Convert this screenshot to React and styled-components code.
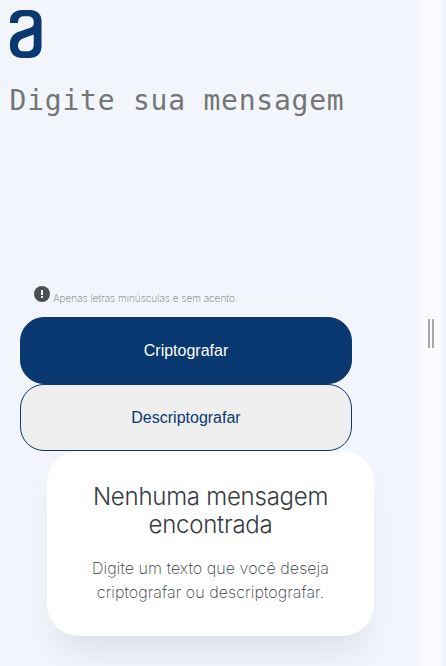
import React from 'react';
import styled, { createGlobalStyle } from 'styled-components';

const GlobalStyle = createGlobalStyle`
  * { box-sizing: border-box; }
  body { margin: 0; background: #f3f5fc; overflow: hidden; }
`;

const Page = styled.div`
  display: grid;
  grid-template-columns: 420px 22px 4px;
  height: 666px;
  overflow: hidden;
`;

const Main = styled.main`
  display: flex;
  flex-direction: column;
  align-items: flex-start;
  overflow: hidden;
  background: #f3f5fc;
`;

const Logo = styled.svg`
  display: block;
  flex: none;
  width: 32px;
  height: 48px;
  margin: 10px 0 0 9.7px;
`;

const Message = styled.textarea`
  display: block;
  flex: none;
  width: 390px;
  height: 198px;
  margin: 24px 0 0 9.5px;
  padding: 0;
  border: 0;
  outline: 0;
  resize: none;
  background: transparent;
  font: 28px/38px "DejaVu Sans Mono", monospace;
  letter-spacing: 0.77px;
  white-space: nowrap;
  overflow: hidden;
  &::placeholder { color: #757575; opacity: 1; }
`;

const Hint = styled.div`
  display: flex;
  flex: none;
  height: 31px;
  margin: 6px 0 0 34px;
  gap: 3px;
`;

const HintIcon = styled.svg`
  width: 16px;
  height: 16px;
`;

const HintText = styled.span`
  margin-top: 4px;
  font: 200 10px/16px Inter, sans-serif;
  letter-spacing: 0.02px;
  color: #6d717c;
  white-space: nowrap;
`;

const Button = styled.button`
  flex: none;
  width: 332px;
  height: 67px;
  margin-left: 20px;
  padding: 0;
  border: 1px solid #0a3871;
  border-radius: 24px;
  background: ${(p) => (p.$primary ? '#0a3871' : '#efefef')};
  color: ${(p) => (p.$primary ? '#fff' : '#0a3871')};
  font: 16px/18px "Liberation Sans", Arial, sans-serif;
`;

const Card = styled.section`
  flex: none;
  width: 327px;
  height: 185px;
  margin-left: 47px;
  padding-top: 32px;
  border-radius: 32px;
  background: #fff;
  box-shadow: 0 24px 32px -8px rgba(0, 0, 0, 0.08);
  text-align: center;
`;

const Title = styled.h2`
  margin: 0;
  font: 350 24px/28px Inter, sans-serif;
  letter-spacing: -0.25px;
  color: #343a40;
`;

const Description = styled.p`
  margin: 17px 0 0;
  font: 200 16px/24px Inter, sans-serif;
  letter-spacing: 0.08px;
  color: #343a40;
`;

const Divider = styled.aside`
  display: flex;
  justify-content: center;
  align-items: center;
  gap: 2px;
  background: #f9fafe;
`;

const Grip = styled.span`
  width: 2px;
  height: 29px;
  background: #a8a8a8;
`;

const Edge = styled.div`
  background: #eff3fb;
`;

export default function App() {
  return (
    <>
      <GlobalStyle />
      <Page>
        <Main>
          <Logo viewBox="0 0 32 48" aria-label="Logo">
            <path
              fill="#0a3871"
              fillRule="evenodd"
              d="M0 13V11C0 4 5 0 12 0H20C27 0 31.5 4 31.5 11V36C31.5 44 27 48 19 48H12C5 48 0 44 0 36V34C0 28 3 24 8 22L19 18.3C22 17.3 23.7 16 23.7 13.5V12C23.7 8.5 21.5 6.3 18 6.3H14C10 6.3 8 8.5 8 13ZM23.7 24.5L13 28.5C9.5 30 8 32 8 35.5C8 39 10 41.3 13.5 41.3H17C21.5 41.3 23.7 39 23.7 34.5Z"
            />
          </Logo>
          <Message placeholder="Digite sua mensagem" spellCheck={false} />
          <Hint>
            <HintIcon viewBox="0 0 16 16">
              <circle cx="8" cy="8" r="8" fill="#495057" />
              <path d="M7 4h2v5H7zM7 10h2v2H7z" fill="#fff" />
            </HintIcon>
            <HintText>Apenas letras minúsculas e sem acento.</HintText>
          </Hint>
          <Button $primary>Criptografar</Button>
          <Button>Descriptografar</Button>
          <Card>
            <Title>
              Nenhuma mensagem
              <br />
              encontrada
            </Title>
            <Description>
              Digite um texto que você deseja
              <br />
              criptografar ou descriptografar.
            </Description>
          </Card>
        </Main>
        <Divider>
          <Grip />
          <Grip />
        </Divider>
        <Edge />
      </Page>
    </>
  );
}
